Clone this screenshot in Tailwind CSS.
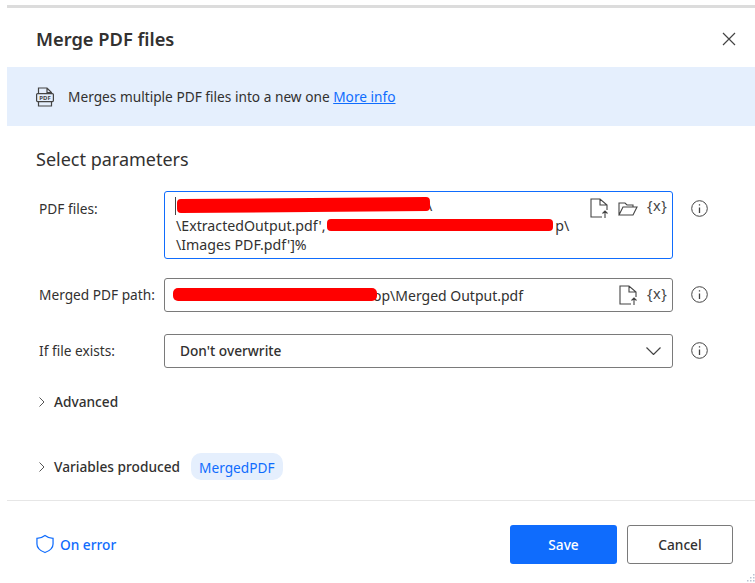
<!DOCTYPE html>
<html lang="en">

<head>
    <meta charset="UTF-8">
    <title>Merge PDF files</title>
    <script src="https://cdn.jsdelivr.net/npm/@tailwindcss/browser@4"></script>
</head>

<body class="bg-white overflow-hidden font-['Noto_Sans',sans-serif] text-[#323130]">
    <div class="w-[755px] h-[583px] pt-[5px] pl-[7px] relative overflow-hidden">
        <div class="h-[3px] bg-[#dcdcdc]"></div>

        <!-- header -->
        <div class="h-[59px] flex items-center justify-between pl-[29px] pr-[19px] pt-[2px]">
            <h1 class="text-[18.3px] font-semibold">Merge PDF files</h1>
            <svg class="w-[14px] h-[14px]" viewBox="0 0 14 14" fill="none" stroke="#444" stroke-width="1.2">
                <path d="M1 1l12 12M13 1L1 13" />
            </svg>
        </div>

        <!-- info banner -->
        <div class="h-[59px] bg-[#e5effd] flex items-center pl-[29px] gap-[14px] text-[13.7px]">
            <svg class="w-[18px] h-[20px]" viewBox="0 0 18 20" fill="none" stroke="#444" stroke-width="1.2">
                <path d="M2.500 6V1h8.500l4.500 4.500V6M11 1v4.500h4.500M2.500 15v4h13v-4" />
                <rect x="0.6" y="6.6" width="16.8" height="8" rx="1" />
                <text x="9" y="13" text-anchor="middle" font-size="6" font-weight="700" fill="#444" stroke="none">PDF</text>
            </svg>
            <p class="pt-[2px]">Merges multiple PDF files into a new one <a href="#" class="text-[#0f6cfd] underline">More info</a></p>
        </div>

        <h2 class="text-[18px] pl-[29px] mt-[21px] h-[25px] leading-[25px]">Select parameters</h2>

        <!-- fields -->
        <div class="mt-[19px] text-[13.7px]">
            <div class="flex h-[68px]">
                <label class="w-[157px] pl-[32px] pt-[8px]">PDF files:</label>
                <div class="w-[509px] border border-[#0f6cfd] rounded-[3px] pl-[11px] pt-[4px] relative text-[14.2px] leading-[19.5px]">
                    <span class="absolute left-[10px] top-[5px] w-px h-[18px] bg-[#444]"></span>
                    <div class="pl-[251px]">\</div>
                    <div>\ExtractedOutput.pdf', <span class="inline-block w-[226px]"></span>p\</div>
                    <div>\Images PDF.pdf']%</div>
                    <span class="absolute left-[12px] top-[6px] w-[253px] h-[14px] bg-[#ff0000] rounded-[4px] -rotate-[0.5deg]"></span>
                    <span class="absolute left-[162px] top-[27px] w-[226px] h-[12px] bg-[#ff0000] rounded-[4px]"></span>
                    <div class="absolute top-[6px] right-[5px] flex items-start gap-[9px]">
                        <svg class="w-[19px] h-[20px]" viewBox="0 0 19 20" fill="none" stroke="#444" stroke-width="1.1">
                            <path d="M12 19H1V1h9l7 6v5M10 1v6h7M15 20v-7M12.500 15.500l2.500-2.500 2.500 2.500" />
                        </svg>
                        <svg class="w-[20px] h-[15px] mt-[3px]" viewBox="0 0 20 15" fill="none" stroke="#444" stroke-width="1.1">
                            <path d="M1 14V2h6l2 2h6v2M1 14h14l4-8H5l-4 8z" />
                        </svg>
                        <span class="text-[14.500px] w-[20px] leading-[15px] tracking-[0.5px] text-[#444]">{x}</span>
                    </div>
                </div>
                <div class="ml-[18px] pt-[9px]">
                    <svg class="w-[17px] h-[17px]" viewBox="0 0 17 17" fill="none" stroke="#444" stroke-width="1">
                        <circle cx="8.500" cy="8.500" r="7.800" />
                        <path d="M8.500 7.500V13M8.500 4.200v1.400" stroke-width="1.300" />
                    </svg>
                </div>
            </div>

            <div class="flex h-[34px] mt-[19px]">
                <label class="w-[157px] pl-[32px] flex items-center">Merged PDF path:</label>
                <div class="w-[509px] border border-[#7a7a7a] rounded-[3px] pl-[15px] pr-[5px] flex items-center justify-between relative">
                    <span class="pl-[193px] text-[14px]">op\Merged Output.pdf</span>
                    <span class="absolute left-[8px] top-[9px] w-[204px] h-[13px] bg-[#ff0000] rounded-[5px]"></span>
                    <div class="flex items-center gap-[9px]">
                        <svg class="w-[19px] h-[20px]" viewBox="0 0 19 20" fill="none" stroke="#444" stroke-width="1.1">
                            <path d="M12 19H1V1h9l7 6v5M10 1v6h7M15 20v-7M12.500 15.500l2.500-2.500 2.500 2.500" />
                        </svg>
                        <span class="text-[14.500px] w-[20px] leading-[15px] -mt-[3px] tracking-[0.5px] text-[#444]">{x}</span>
                    </div>
                </div>
                <div class="ml-[18px] pt-[8px]">
                    <svg class="w-[17px] h-[17px]" viewBox="0 0 17 17" fill="none" stroke="#444" stroke-width="1">
                        <circle cx="8.500" cy="8.500" r="7.800" />
                        <path d="M8.500 7.500V13M8.500 4.200v1.400" stroke-width="1.300" />
                    </svg>
                </div>
            </div>

            <div class="flex h-[34px] mt-[22px]">
                <label class="w-[157px] pl-[32px] flex items-center">If file exists:</label>
                <div class="w-[509px] border border-[#7a7a7a] rounded-[3px] pl-[15px] pr-[11px] flex items-center justify-between">
                    <span class="font-medium">Don't overwrite</span>
                    <svg class="w-[15px] h-[8px]" viewBox="0 0 15 8" fill="none" stroke="#444" stroke-width="1.2">
                        <path d="M0.500 0.500l7 7 7-7" />
                    </svg>
                </div>
                <div class="ml-[18px] pt-[8px]">
                    <svg class="w-[17px] h-[17px]" viewBox="0 0 17 17" fill="none" stroke="#444" stroke-width="1">
                        <circle cx="8.500" cy="8.500" r="7.800" />
                        <path d="M8.500 7.500V13M8.500 4.200v1.400" stroke-width="1.300" />
                    </svg>
                </div>
            </div>
        </div>

        <!-- collapsed sections -->
        <div class="flex items-center h-[20px] mt-[24px] pl-[32px] gap-[10px] text-[13.7px] font-medium">
            <svg class="w-[5px] h-[10px] text-[#555]" viewBox="0 0 5 10" fill="none" stroke="currentColor">
                <path d="M0.500 0.500L5 5 0.500 9.500" />
            </svg>
            <span>Advanced</span>
        </div>
        <div class="flex items-center h-[27px] mt-[41px] pl-[32px] text-[13.7px] font-medium">
            <svg class="w-[5px] h-[10px] text-[#555] mr-[10px]" viewBox="0 0 5 10" fill="none" stroke="currentColor">
                <path d="M0.500 0.500L5 5 0.500 9.500" />
            </svg>
            <span class="pt-[2px]">Variables produced</span>
            <span class="ml-[11px] h-[27px] px-[8px] rounded-[10px] bg-[#e5effd] text-[#0f6cfd] font-normal leading-[29px]">MergedPDF</span>
        </div>

        <!-- footer -->
        <div class="h-px bg-[#e6e6e6] mt-[20px]"></div>
        <div class="flex items-center justify-between pl-[29px] pr-[22px] pt-[24px]">
            <a href="#" class="flex items-center gap-[6px] text-[13.7px] font-medium text-[#0f6cfd]">
                <svg class="w-[18px] h-[20px]" viewBox="0 0 19 20" fill="none" stroke="#0f6cfd" stroke-width="1.300">
                    <path d="M9.500 1c2.500 2 5 3 8.500 3v6c0 4-3 7-8.500 9C4 17 1 14 1 10V4c3.500 0 6-1 8.500-3z" />
                </svg>
                <span class="pt-[2px]">On error</span>
            </a>
            <div class="flex gap-[10px] text-[13.7px] font-medium">
                <button class="w-[107px] h-[39px] pt-[2px] rounded-[3px] bg-[#0f6cfd] text-white">Save</button>
                <button class="w-[106px] h-[39px] pt-[2px] rounded-[3px] border border-[#7a7a7a] bg-white">Cancel</button>
            </div>
        </div>

        <!-- resize grip in the corner -->
        <svg class="absolute right-0 bottom-0 w-[10px] h-[9px]" viewBox="0 0 10 9" fill="#b9c4d4">
            <rect x="8" y="0" width="1.500" height="1.500" />
            <rect x="5" y="3" width="1.500" height="1.500" />
            <rect x="8" y="3" width="1.500" height="1.500" />
            <rect x="2" y="6" width="1.500" height="1.500" />
            <rect x="5" y="6" width="1.500" height="1.500" />
            <rect x="8" y="6" width="1.500" height="1.500" />
        </svg>
    </div>
</body>

</html>
